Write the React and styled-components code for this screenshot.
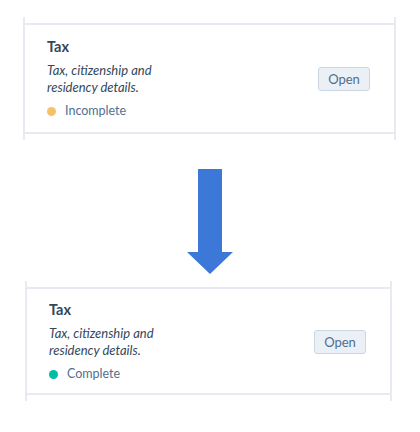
import React from "react";
import styled, { createGlobalStyle } from "styled-components";

const GlobalStyle = createGlobalStyle`
  body {
    margin: 0;
    background: #ffffff;
    font-family: "Lato", "Noto Sans", sans-serif;
  }
`;

const Page = styled.div`
  display: flex;
  flex-direction: column;
  padding-top: 17px;
  width: 420px;
`;

const Panel = styled.div`
  margin-left: ${(p) => p.left}px;
  width: ${(p) => p.width}px;
  border-left: 2px solid #e8eaf1;
  border-right: 2px solid #e8eaf1;
  padding: 6px 0;
  box-sizing: border-box;
`;

const Row = styled.div`
  display: flex;
  align-items: center;
  justify-content: space-between;
  border-top: 2px solid #e8eaf1;
  border-bottom: 2px solid #e8eaf1;
  padding: ${(p) => (p.compact ? "12px 24px 10px 22px" : "13px 24px 12px 22px")};
`;

const Info = styled.div`
  display: flex;
  flex-direction: column;
`;

const Title = styled.div`
  font-size: 14.5px;
  font-weight: 700;
  line-height: 18px;
  color: #33475b;
`;

const Desc = styled.div`
  margin-top: 6px;
  font-size: 13px;
  font-style: italic;
  line-height: 17px;
  color: #33475b;
  width: 120px;
`;

const Status = styled.div`
  display: flex;
  align-items: center;
  gap: 9px;
  margin-top: 6px;
  font-size: 12.5px;
  line-height: 18px;
  color: #516f90;
`;

const Dot = styled.span`
  width: 9px;
  height: 9px;
  border-radius: 50%;
  background: ${(p) => p.color};
`;

const OpenBtn = styled.button`
  width: 52px;
  height: 24px;
  padding: 0;
  border: 1px solid #cbd6e2;
  border-radius: 3px;
  background: #eaf0f6;
  color: #506e91;
  font-family: inherit;
  font-size: 13px;
  cursor: pointer;
`;

const ArrowWrap = styled.div`
  display: flex;
  justify-content: center;
  margin: 29px 0 7px;
`;

function TaxCard({ left, width, status, color, compact }) {
  return (
    <Panel left={left} width={width}>
      <Row compact={compact}>
        <Info>
          <Title>Tax</Title>
          <Desc>Tax, citizenship and residency details.</Desc>
          <Status>
            <Dot color={color} />
            {status}
          </Status>
        </Info>
        <OpenBtn>Open</OpenBtn>
      </Row>
    </Panel>
  );
}

export default function App() {
  return (
    <Page>
      <GlobalStyle />
      <TaxCard left={23} width={373} status="Incomplete" color="#f5c26b" />
      <ArrowWrap>
        <svg width="46" height="105" viewBox="0 0 46 105">
          <polygon points="11,0 35,0 35,83 46,83 23,105 0,83 11,83" fill="#3b78d8" />
        </svg>
      </ArrowWrap>
      <TaxCard left={25} width={367} status="Complete" color="#00bda5" compact />
    </Page>
  );
}
